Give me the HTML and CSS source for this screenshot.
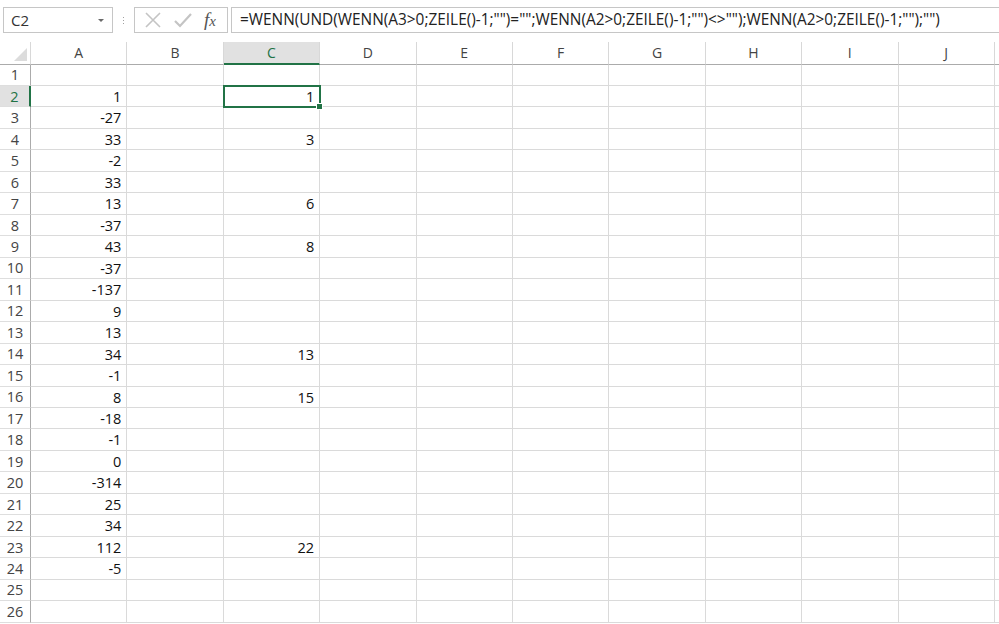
FILE: index.html
```html
<!DOCTYPE html>
<html lang="de">
<head>
<meta charset="utf-8">
<title>Excel</title>
<link rel="stylesheet" href="styles.css">
</head>
<body>
<div class="app">
  <div class="toolbar">
    <div class="namebox"><span class="name">C2</span><span class="drop"></span></div>
    <div class="dots"><i></i><i></i><i></i></div>
    <div class="fxbox">
      <svg class="ic" width="20" height="20" viewBox="0 0 20 20"><path d="M3 3 L17 17 M17 3 L3 17" stroke="#c4c4c4" stroke-width="1.6" fill="none"/></svg>
      <svg class="ic" width="20" height="20" viewBox="0 0 20 20"><path d="M2 11 L7 16 L18 4" stroke="#c4c4c4" stroke-width="2.2" fill="none"/></svg>
      <span class="fx"><i>f</i><i class="x">x</i></span>
    </div>
    <div class="formula">=WENN(UND(WENN(A3&gt;0;ZEILE()-1;"")="";WENN(A2&gt;0;ZEILE()-1;"")&lt;&gt;"");WENN(A2&gt;0;ZEILE()-1;"");"")</div>
  </div>
  <div class="sheet">
    <div class="grid" id="grid">
      <div class="corner"><span class="tri"></span></div>
      <div class="ch">A</div><div class="ch">B</div><div class="ch sel">C</div><div class="ch">D</div><div class="ch">E</div>
      <div class="ch">F</div><div class="ch">G</div><div class="ch">H</div><div class="ch">I</div><div class="ch">J</div><div class="ch rest"></div>
    </div>
  </div>
</div>
<script>
var a = ["", "1","-27","33","-2","33","13","-37","43","-37","-137","9","13","34","-1","8","-18","-1","0","-314","25","34","112","-5","",""];
var c = {2:"1",4:"3",7:"6",9:"8",14:"13",16:"15",23:"22"};
var g = document.getElementById("grid");
for (var r = 1; r <= 26; r++) {
  var h = document.createElement("div");
  h.className = "rh" + (r === 2 ? " sel" : "");
  h.textContent = r;
  g.appendChild(h);
  for (var k = 0; k < 11; k++) {
    var d = document.createElement("div");
    d.className = "cell" + (k === 10 ? " rest" : "");
    if (k === 0) d.textContent = a[r-1];
    if (k === 2 && c[r]) d.textContent = c[r];
    if (k === 2 && r === 2) { d.className += " active"; var f = document.createElement("span"); f.className = "handle"; d.appendChild(f); }
    g.appendChild(d);
  }
}
</script>
</body>
</html>
```
FILE: styles.css
```css
html, body {
  margin: 0;
  padding: 0;
  background: #ffffff;
}
.app {
  width: 999px;
  height: 624px;
  overflow: hidden;
  font-family: "Open Sans", "Liberation Sans", sans-serif;
  color: #222;
}
.toolbar {
  height: 42px;
  display: flex;
  align-items: flex-start;
  padding-top: 7px;
  box-sizing: border-box;
  background: #ffffff;
}
.namebox {
  margin-left: 3px;
  width: 110px;
  height: 26px;
  box-sizing: border-box;
  border: 1px solid #c6c6c6;
  display: flex;
  align-items: center;
  justify-content: space-between;
  padding: 0 8px 0 7px;
}
.name {
  font-size: 15px;
  color: #333;
}
.drop {
  width: 0;
  height: 0;
  border-left: 3px solid transparent;
  border-right: 3px solid transparent;
  border-top: 3px solid #6a6a6a;
}
.dots {
  width: 21px;
  height: 26px;
  display: flex;
  flex-direction: column;
  align-items: center;
  justify-content: center;
  gap: 2px;
}
.dots i {
  width: 1px;
  height: 1px;
  background: #a0a0a0;
  display: block;
}
.fxbox {
  width: 94px;
  height: 26px;
  box-sizing: border-box;
  border: 1px solid #c6c6c6;
  display: flex;
  align-items: center;
  padding-left: 8px;
  gap: 10px;
}
.fx {
  font-family: "Liberation Serif", serif;
  font-size: 19px;
  color: #555;
  margin-left: 1px;
}
.fx i { font-style: italic; }
.fx .x { font-size: 15px; }
.formula {
  margin-left: 3px;
  flex: 1;
  height: 26px;
  box-sizing: border-box;
  border: 1px solid #c6c6c6;
  border-right: none;
  font-size: 15.4px;
  line-height: 24px;
  padding-left: 8px;
  color: #222;
  white-space: nowrap;
  overflow: hidden;
}
.sheet {
  height: 582px;
  overflow: hidden;
}
.grid {
  display: grid;
  grid-template-columns: 31px repeat(10, 96.4px) 1fr;
  grid-template-rows: 22.5px repeat(26, 21.48px);
}
.corner {
  border-right: 1px solid #d8d8d8;
  border-bottom: 1px solid #ababab;
  position: relative;
}
.tri {
  position: absolute;
  right: 3px;
  bottom: 3px;
  width: 0;
  height: 0;
  border-left: 13px solid transparent;
  border-bottom: 13px solid #dcdcdc;
}
.ch {
  border-right: 1px solid #d8d8d8;
  border-bottom: 1px solid #ababab;
  display: flex;
  align-items: center;
  justify-content: center;
  font-size: 14px;
  color: #444;
  box-sizing: border-box;
}
.ch.sel {
  background: #e1e1e1;
  border-bottom: 2px solid #217346;
  color: #217346;
}
.ch.rest { border-right: none; }
.rh {
  border-right: 1px solid #ababab;
  border-bottom: 1px solid #dedede;
  display: flex;
  align-items: center;
  justify-content: center;
  font-size: 14.5px;
  color: #444;
  box-sizing: border-box;
}
.rh.sel {
  background: #e1e1e1;
  border-right: 2px solid #217346;
  color: #217346;
}
.cell {
  border-right: 1px solid #dadada;
  border-bottom: 1px solid #dadada;
  box-sizing: border-box;
  text-align: right;
  font-family: "Open Sans", "Liberation Sans", sans-serif;
  font-size: 14.5px;
  line-height: 21px;
  padding-right: 5px;
  color: #111;
  position: relative;
}
.cell.rest { border-right: none; }
.cell.active {
  outline: 2px solid #217346;
  outline-offset: -1px;
  z-index: 2;
}
.handle {
  position: absolute;
  right: -4px;
  bottom: -4px;
  width: 5px;
  height: 5px;
  background: #217346;
  border: 1px solid #fff;
}
```
